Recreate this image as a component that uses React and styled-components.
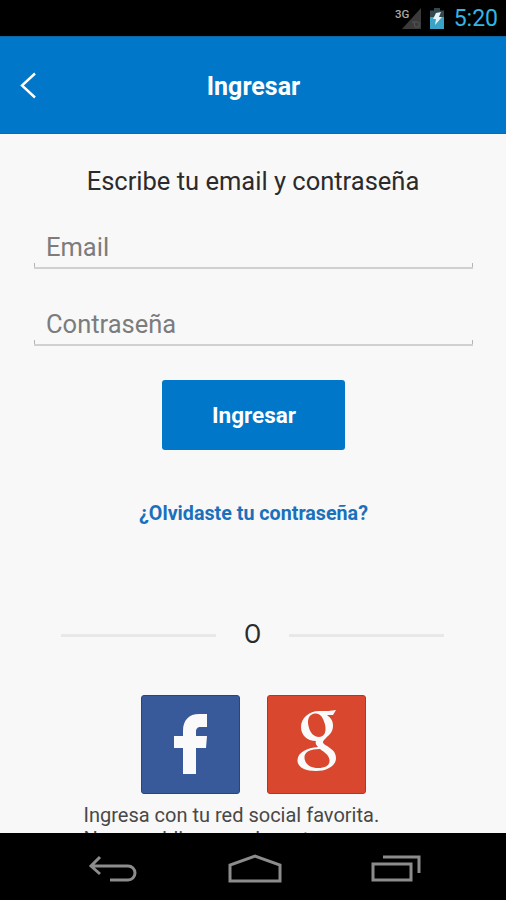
import React, { useState } from "react";
import styled, { createGlobalStyle, ThemeProvider } from "styled-components";

const theme = {
  blue: "#0077c8",
  linkColor: "#1a70bb",
  bgColor: "#f8f8f8",
  textColor: "#2b2b2b",
  hintColor: "#7c7c7c",
  lineColor: "#d0d0d0",
  holo: "#33b5e5",
  navIcon: "#8c8c8c",
};

const GlobalStyle = createGlobalStyle`
  * {
    box-sizing: border-box;
  }
  body {
    margin: 0;
    background-color: #000;
    font-family: Roboto, "Noto Sans", sans-serif;
  }
`;

const Screen = styled.div`
  width: 506px;
  height: 900px;
  display: flex;
  flex-direction: column;
  overflow: hidden;
  background-color: ${(props) => props.theme.bgColor};
`;

const StatusBar = styled.div`
  flex: none;
  height: 36px;
  padding: 1px 8px 0 0;
  display: flex;
  align-items: center;
  justify-content: flex-end;
  background-color: #000;
`;

const Clock = styled.span`
  margin-left: 8px;
  color: ${(props) => props.theme.holo};
  font-size: 23px;
  line-height: 36px;
`;

const Header = styled.header`
  flex: none;
  height: 98px;
  padding-top: 3px;
  display: grid;
  grid-template-columns: 60px 1fr 59px;
  align-items: center;
  background-color: ${(props) => props.theme.blue};
  border-top: 1px solid #0b65a4;
  border-bottom: 1px solid #0a6cb8;
`;

const BackButton = styled.button`
  padding: 0 0 3px 19px;
  display: flex;
  border: 0;
  background: none;
`;

const Title = styled.h1`
  margin: 0;
  padding-top: 1px;
  color: #fff;
  font-size: 25px;
  font-weight: 700;
  line-height: 30px;
  text-align: center;
`;

const Content = styled.main`
  flex: 1;
  min-height: 0;
  overflow: hidden;
  display: flex;
  flex-direction: column;
  align-items: center;
`;

const Heading = styled.h2`
  margin: 31px 0 0;
  color: ${(props) => props.theme.textColor};
  font-size: 25.5px;
  font-weight: 400;
  line-height: 32px;
  white-space: nowrap;
`;

const Form = styled.form`
  width: 440px;
  display: flex;
  flex-direction: column;
  align-items: center;
`;

const Field = styled.label`
  width: 439px;
  height: 38px;
  margin-top: ${(props) => props.$top}px;
  margin-left: 1px;
  padding-top: 1px;
  display: block;
  border-bottom: 2px solid ${(props) => props.theme.lineColor};
  /* holo style ticks at both ends of the line */
  background:
    linear-gradient(#b4b4b4, #b4b4b4) left bottom / 1px 4px no-repeat,
    linear-gradient(#b4b4b4, #b4b4b4) right bottom / 1px 4px no-repeat;
`;

const Input = styled.input`
  width: 100%;
  height: 30px;
  padding: 0 12px;
  display: block;
  border: 0;
  outline: none;
  background: none;
  font-family: inherit;
  font-size: 25.5px;
  color: ${(props) => props.theme.textColor};
  &::placeholder {
    color: ${(props) => props.theme.hintColor};
    opacity: 1;
  }
`;

const Submit = styled.button`
  width: 183px;
  height: 70px;
  margin-top: 34px;
  padding: 0 0 0 2px;
  border: 0;
  border-radius: 3px;
  background-color: ${(props) => props.theme.blue};
  color: #fff;
  font-family: inherit;
  font-size: 22.5px;
  font-weight: 700;
`;

const Forgot = styled.a`
  margin: 52px 0 0 1px;
  color: ${(props) => props.theme.linkColor};
  font-size: 19.7px;
  font-weight: 700;
  line-height: 24px;
`;

const Divider = styled.div`
  width: 383px;
  margin: 93px 1px 0 0;
  display: grid;
  grid-template-columns: 155px 1fr 155px;
  align-items: center;
  color: ${(props) => props.theme.textColor};
  font-size: 25px;
  line-height: 32px;
  text-align: center;
`;

const Line = styled.span`
  height: 3px;
  background-color: #e8e8e8;
`;

const Social = styled.div`
  margin-top: 44px;
  display: flex;
  gap: 27px;
`;

const SocialButton = styled.button`
  width: 99px;
  height: 99px;
  padding: 0;
  display: flex;
  border: 1px solid ${(props) => props.$edge};
  border-radius: 3px;
  background-color: ${(props) => props.$bg};
`;

const Note = styled.p`
  width: 339px;
  margin: 9px 0 0;
  color: #484848;
  font-size: 20px;
  line-height: 24px;
  white-space: nowrap;
`;

const NavBar = styled.nav`
  flex: none;
  height: 67px;
  padding: 2px 85px 0 88px;
  display: flex;
  align-items: center;
  justify-content: space-between;
  background-color: #000;
`;

const NavIcon = styled.svg`
  display: block;
  fill: none;
  stroke: ${(props) => props.theme.navIcon};
  stroke-width: 3;
`;

const SignalIcon = () => (
  <svg width="52" height="28" viewBox="0 0 52 28">
    <path d="M27 3V24H8Z" fill="#3a3a3a" />
    <path d="M18 17h6M20 17l1 5h4v-5" stroke="#555" fill="none" />
    <text x="1" y="12.500" fill="#a8a8a8" fontSize="11.500" fontWeight="500" fontFamily="Roboto, sans-serif">
      3G
    </text>
    <path d="M40 3h6v2.500h4V24H36V5.500h4Z" fill="#34494f" />
    <path d="M36 12h14v12H36Z" fill="#3aa3c5" />
    <path d="M42 8l5-1-2 5h3l-7 8 1-6h-3Z" fill="#e5f4f8" />
  </svg>
);

const BackIcon = () => (
  <svg width="18" height="28" viewBox="0 0 18 28" fill="none" stroke="#fff" strokeWidth="2.400">
    <path d="M16 2.500L3 14.500L16 26.500" />
  </svg>
);

const FacebookIcon = () => (
  <svg width="97" height="97" viewBox="1 1 97 97">
    <path
      d="M42 79V53H33V41H42V36C42 25 48 19 58 19H66V32H60C56 32 55 34 55 37V41H66L65 53H55V79Z"
      fill="#fafafa"
    />
  </svg>
);

const GoogleIcon = () => (
  <svg width="97" height="97" viewBox="1 1 97 97">
    <path
      fillRule="evenodd"
      fill="#fafafa"
      d="M69 15L66 20H60C64 23 66 26 66 31C66 37 62 40 59 43C56 46 55 47 57 49C61 52 69 55 69 63C69 71 60 76 49 76C38 76 30 72 30.500 65C31 57 40 53 51 52C49 50 48 48 49 46C40 46 34 40 34 32C34 23 42 16 52 16C58 16 65 16 69 15ZM48 18.500C42 19 40 25 41.500 31C43 38 47 42 52 42C58 41.500 59.500 36 58 29.500C56 22 53 18 48 18.500ZM53 54C43 54 37 57 37.500 63C38 69 43 73 51 73C59 73 63 70 62.500 65C62 60 57 57 53 54Z"
    />
  </svg>
);

export default () => {
  const [email, setEmail] = useState("");
  const [password, setPassword] = useState("");

  const onSubmit = (e) => {
    e.preventDefault();
  };

  return (
    <ThemeProvider theme={theme}>
      <GlobalStyle />
      <Screen>
        <StatusBar>
          <SignalIcon />
          <Clock>5:20</Clock>
        </StatusBar>
        <Header>
          <BackButton>
            <BackIcon />
          </BackButton>
          <Title>Ingresar</Title>
        </Header>
        <Content>
          <Heading>Escribe tu email y contraseña</Heading>
          <Form onSubmit={onSubmit}>
            <Field $top={34}>
              <Input placeholder="Email" value={email} onChange={(e) => setEmail(e.target.value)} />
            </Field>
            <Field $top={39}>
              <Input
                type="password"
                placeholder="Contraseña"
                value={password}
                onChange={(e) => setPassword(e.target.value)}
              />
            </Field>
            <Submit>Ingresar</Submit>
          </Form>
          <Forgot>¿Olvidaste tu contraseña?</Forgot>
          <Divider>
            <Line />
            O
            <Line />
          </Divider>
          <Social>
            <SocialButton $bg="#395a9a" $edge="#20478c">
              <FacebookIcon />
            </SocialButton>
            <SocialButton $bg="#d9472e" $edge="#cd2a18">
              <GoogleIcon />
            </SocialButton>
          </Social>
          <Note>
            Ingresa con tu red social favorita.
            <br />
            No se publicara nada en tu muro.
          </Note>
        </Content>
        <NavBar>
          <NavIcon width="50" height="28" viewBox="0 0 50 28">
            <path d="M3 12H40a7 7 0 0 1 0 14H22M12 3L3 12L12 20" />
          </NavIcon>
          <NavIcon width="54" height="30" viewBox="0 0 54 30">
            <path d="M2 28V12L27 3L52 12V28Z" />
          </NavIcon>
          <NavIcon width="50" height="28" viewBox="0 0 50 28">
            <path d="M2 10H40V26H2ZM12 3H48V19" />
          </NavIcon>
        </NavBar>
      </Screen>
    </ThemeProvider>
  );
};
